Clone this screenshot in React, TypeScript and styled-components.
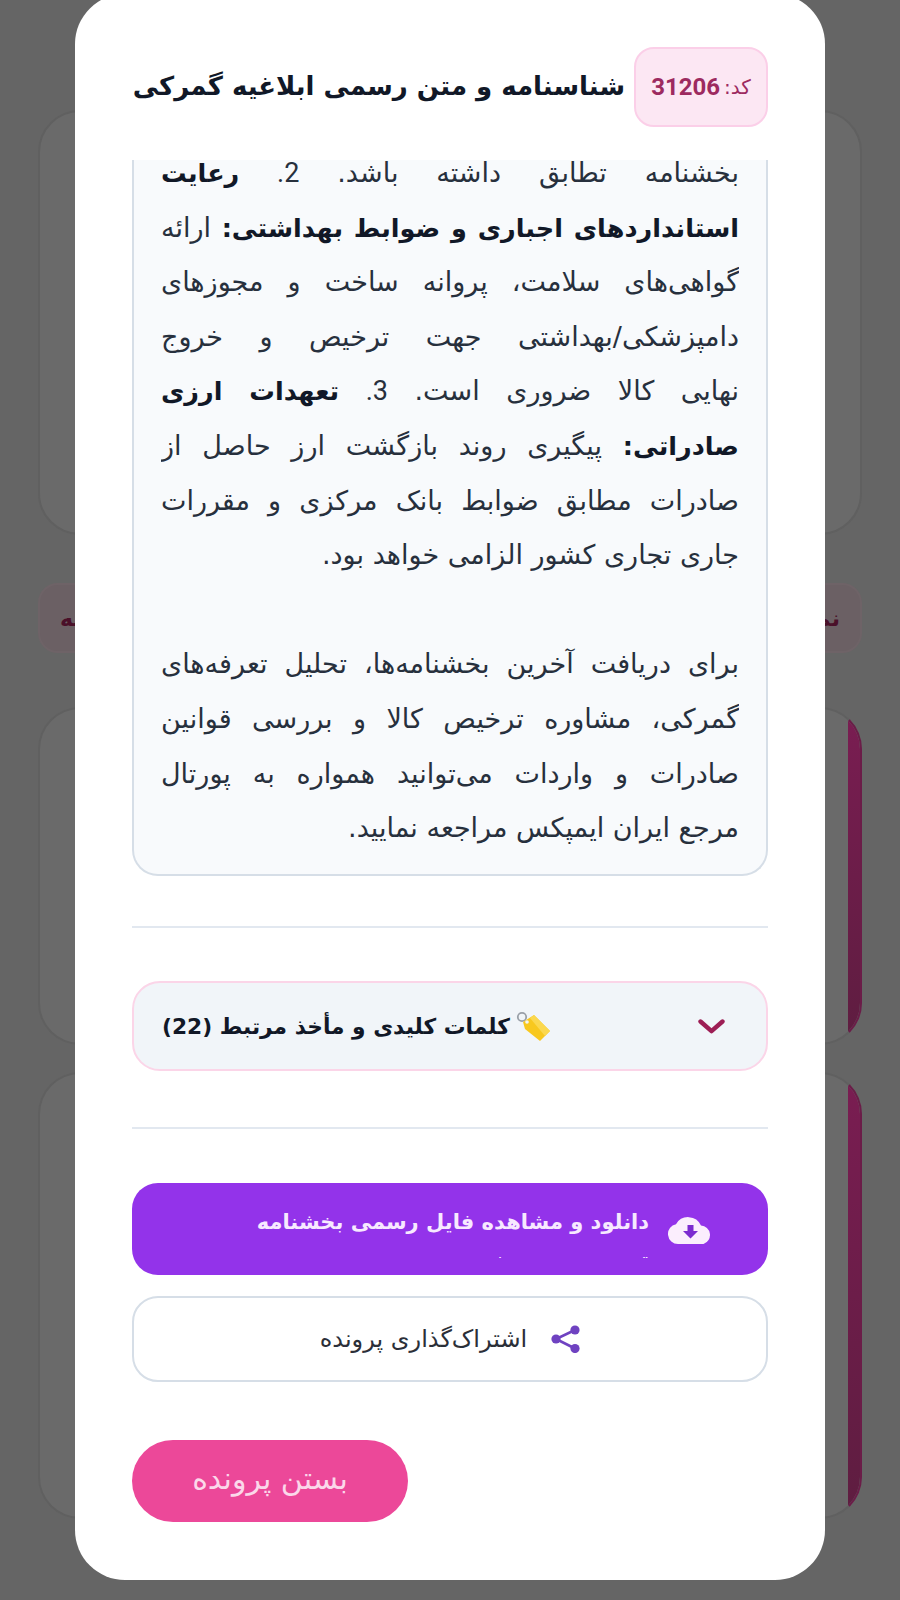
import React from "react";
import styled, { createGlobalStyle } from "styled-components";

const Global = createGlobalStyle`
  html, body { margin: 0; padding: 0; height: 1600px; overflow: hidden; background: #656565; }
  * { box-sizing: border-box; }
  body { font-family: "DejaVu Sans", "Noto Sans", sans-serif; }
`;

const Page = styled.div`
  direction: rtl;
  height: 1600px;
  padding: 110px 38px 0;
  display: flex;
  flex-direction: column;
  overflow: hidden;
  background: #656565;
`;

const BgCard = styled.div<{ $h: number; $gap: number; $stripe?: boolean }>`
  flex: none;
  position: relative;
  overflow: hidden;
  height: ${(p) => p.$h}px;
  margin-bottom: ${(p) => p.$gap}px;
  border-radius: 42px;
  background: #6a6a6a;
  border: 2px solid #606060;
  ${(p) =>
    p.$stripe
      ? `border-right-color: #6b1c48;
        &::after {
          content: "";
          position: absolute;
          top: 0;
          bottom: 0;
          right: 0;
          width: 12px;
          background: linear-gradient(#7a1d52, #5e1d40);
        }`
      : ""}
`;

const BgNotice = styled.div`
  flex: none;
  height: 70px;
  margin-bottom: 54px;
  padding: 0 20px;
  border-radius: 20px;
  background: #6b6064;
  border: 2px solid #6e6367;
  display: flex;
  align-items: center;
  justify-content: space-between;
  color: #4a1029;
  font-size: 22px;
  font-weight: 700;
`;

const Modal = styled.div`
  position: fixed;
  left: 75px;
  top: -6px;
  width: 750px;
  height: 1586px;
  background: #fff;
  border-radius: 50px;
  padding: 6px 57px 0;
  direction: rtl;
  display: flex;
  flex-direction: column;
  overflow: hidden;
`;

const Header = styled.header`
  flex: none;
  height: 113px;
  margin-top: 47px;
  display: flex;
  align-items: flex-start;
  gap: 9px;
`;

const Badge = styled.div`
  flex: none;
  width: 134px;
  height: 80px;
  background: #fce7f3;
  border: 2px solid #fbcfe8;
  border-radius: 20px;
  display: flex;
  align-items: center;
  justify-content: center;
  gap: 4px;
  font-size: 20px;
  color: #9d2a5f;
`;

const Code = styled.span`
  font-family: "Roboto", "Liberation Sans", sans-serif;
  font-weight: 700;
  font-size: 24px;
`;

const Title = styled.h2`
  margin: 0;
  height: 80px;
  line-height: 78px;
  font-size: 26px;
  font-weight: 700;
  color: #111827;
  white-space: nowrap;
`;

const Body = styled.div`
  flex: none;
  height: 716px;
  padding: 0 27px 0 27px;
  overflow: hidden;
  background: #f8fafc;
  border: 2px solid #d6dee7;
  border-top: none;
  border-radius: 0 0 26px 26px;
`;

const Inner = styled.div`
  margin-top: -14px;
`;

const Line = styled.div<{ $last?: boolean }>`
  height: 54.6px;
  line-height: 54.6px;
  font-size: 27px;
  color: #27303d;
  text-align: justify;
  text-align-last: ${(p) => (p.$last ? "start" : "justify")};
  overflow: hidden;
`;

const Strong = styled.strong`
  font-size: 25.5px;
  font-weight: 700;
  color: #111827;
`;

const Latin = styled.span`
  font-family: "Roboto", "Liberation Sans", sans-serif;
`;

const Divider = styled.hr<{ $top: number; $bottom: number }>`
  flex: none;
  width: 100%;
  height: 2px;
  margin: ${(p) => p.$top}px 0 ${(p) => p.$bottom}px;
  border: none;
  background: #e2e8f0;
`;

const Accordion = styled.div`
  flex: none;
  height: 90px;
  padding: 0 41px 0 28px;
  background: #f1f5f9;
  border: 2px solid #fbd5e8;
  border-radius: 28px;
  display: flex;
  align-items: center;
  justify-content: space-between;
`;

const AccordionLabel = styled.span`
  display: flex;
  align-items: center;
  gap: 6px;
  font-size: 21.75px;
  font-weight: 700;
  color: #111827;
`;

const DownloadButton = styled.button`
  flex: none;
  height: 92px;
  padding: 0 55px 0 0;
  font: inherit;
  direction: rtl;
  background: #9333ea;
  border: none;
  border-radius: 26px;
  color: #f7e9ff;
  display: flex;
  align-items: flex-start;
  gap: 19px;
`;

const CloudIcon = styled.svg`
  flex: none;
  margin-top: 34px;
`;

const DownloadText = styled.span`
  margin-top: 20px;
  width: 420px;
  height: 55px;
  overflow: hidden;
  font-size: 21px;
  font-weight: 700;
  line-height: 38px;
  text-align: right;
`;

const ShareButton = styled.button`
  flex: none;
  height: 86px;
  margin-top: 21px;
  font: inherit;
  direction: rtl;
  background: #fff;
  border: 2px solid #d6dee7;
  border-radius: 26px;
  color: #2b2f38;
  font-size: 24px;
  display: flex;
  align-items: center;
  justify-content: center;
  gap: 24px;
`;

const CloseButton = styled.button`
  flex: none;
  align-self: flex-end;
  width: 276px;
  height: 82px;
  margin-top: 58px;
  padding: 0 0 5px;
  font: inherit;
  font-size: 30px;
  background: #ec4899;
  border: none;
  border-radius: 41px;
  color: #fbd8ea;
`;

function TagIcon() {
  return (
    <svg width="34" height="30" viewBox="0 0 34 30" aria-hidden="true">
      <circle cx="6" cy="6" r="4.2" fill="none" stroke="#9aa0a8" strokeWidth="1.8" />
      <path d="M7 11 L18 4 L34 20 L24 30 L9 18 Z" fill="#f8c81e" />
      <path d="M18 4 L34 20 L29 25 L14 7 Z" fill="#fbd84f" />
      <circle cx="11" cy="11" r="1.8" fill="#f1f5f9" />
    </svg>
  );
}

function ChevronIcon() {
  return (
    <svg width="27" height="15" viewBox="0 0 27 15" aria-hidden="true">
      <polyline
        points="2.5,2.5 13.5,12.2 24.5,2.5"
        fill="none"
        stroke="#9d1e55"
        strokeWidth="4.4"
        strokeLinecap="round"
        strokeLinejoin="round"
      />
    </svg>
  );
}

function CloudDownloadIcon() {
  return (
    <CloudIcon width="45" height="27" viewBox="0 0 45 27" aria-hidden="true">
      <path d="M10 27a10 10 0 0 1-2-19.8A14 14 0 0 1 33 8.5 9.5 9.5 0 0 1 35.5 27Z" fill="#fbeefd" />
      <path d="M19.5 8h6v6h4.5l-7.5 7.5L15 14h4.5Z" fill="#7c2bd0" />
    </CloudIcon>
  );
}

function ShareIcon() {
  return (
    <svg width="29" height="28" viewBox="0 0 29 28" aria-hidden="true">
      <path d="M24 5 L5 14 L24 23.5" fill="none" stroke="#6f42c1" strokeWidth="2.6" />
      <circle cx="5" cy="14" r="4.6" fill="#6f42c1" />
      <circle cx="24" cy="5" r="4.6" fill="#6f42c1" />
      <circle cx="24" cy="23.5" r="4.6" fill="#6f42c1" />
    </svg>
  );
}

export default function App() {
  return (
    <>
      <Global />
      <Page>
        <BgCard $h={425} $gap={48} />
        <BgNotice>
          <span>نمایش</span>
          <span>بخشنامه</span>
        </BgNotice>
        <BgCard $h={338} $gap={27} $stripe />
        <BgCard $h={447} $gap={0} $stripe />
      </Page>
      <Modal>
        <Header>
          <Badge>
            <span>کد:</span>
            <Code>31206</Code>
          </Badge>
          <Title>شناسنامه و متن رسمی ابلاغیه گمرکی</Title>
        </Header>
        <Body>
          <Inner>
            <Line>
              بخشنامه تطابق داشته باشد. <Latin>2.</Latin> <Strong>رعایت</Strong>
            </Line>
            <Line>
              <Strong>استانداردهای اجباری و ضوابط بهداشتی:</Strong> ارائه
            </Line>
            <Line>گواهی‌های سلامت، پروانه ساخت و مجوزهای</Line>
            <Line>دامپزشکی/بهداشتی جهت ترخیص و خروج</Line>
            <Line>
              نهایی کالا ضروری است. <Latin>3.</Latin> <Strong>تعهدات ارزی</Strong>
            </Line>
            <Line>
              <Strong>صادراتی:</Strong> پیگیری روند بازگشت ارز حاصل از
            </Line>
            <Line>صادرات مطابق ضوابط بانک مرکزی و مقررات</Line>
            <Line $last>جاری تجاری کشور الزامی خواهد بود.</Line>
            <Line $last>&nbsp;</Line>
            <Line>برای دریافت آخرین بخشنامه‌ها، تحلیل تعرفه‌های</Line>
            <Line>گمرکی، مشاوره ترخیص کالا و بررسی قوانین</Line>
            <Line>صادرات و واردات می‌توانید همواره به پورتال</Line>
            <Line $last>مرجع ایران ایمپکس مراجعه نمایید.</Line>
          </Inner>
        </Body>
        <Divider $top={50} $bottom={53} />
        <Accordion>
          <ChevronIcon />
          <AccordionLabel>
            <TagIcon />
            کلمات کلیدی و مأخذ مرتبط (22)
          </AccordionLabel>
        </Accordion>
        <Divider $top={56} $bottom={54} />
        <DownloadButton>
          <CloudDownloadIcon />
          <DownloadText>
            دانلود و مشاهده فایل رسمی بخشنامه تصویر رسمی نو
          </DownloadText>
        </DownloadButton>
        <ShareButton>
          <ShareIcon />
          اشتراک‌گذاری پرونده
        </ShareButton>
        <CloseButton>بستن پرونده</CloseButton>
      </Modal>
    </>
  );
}
